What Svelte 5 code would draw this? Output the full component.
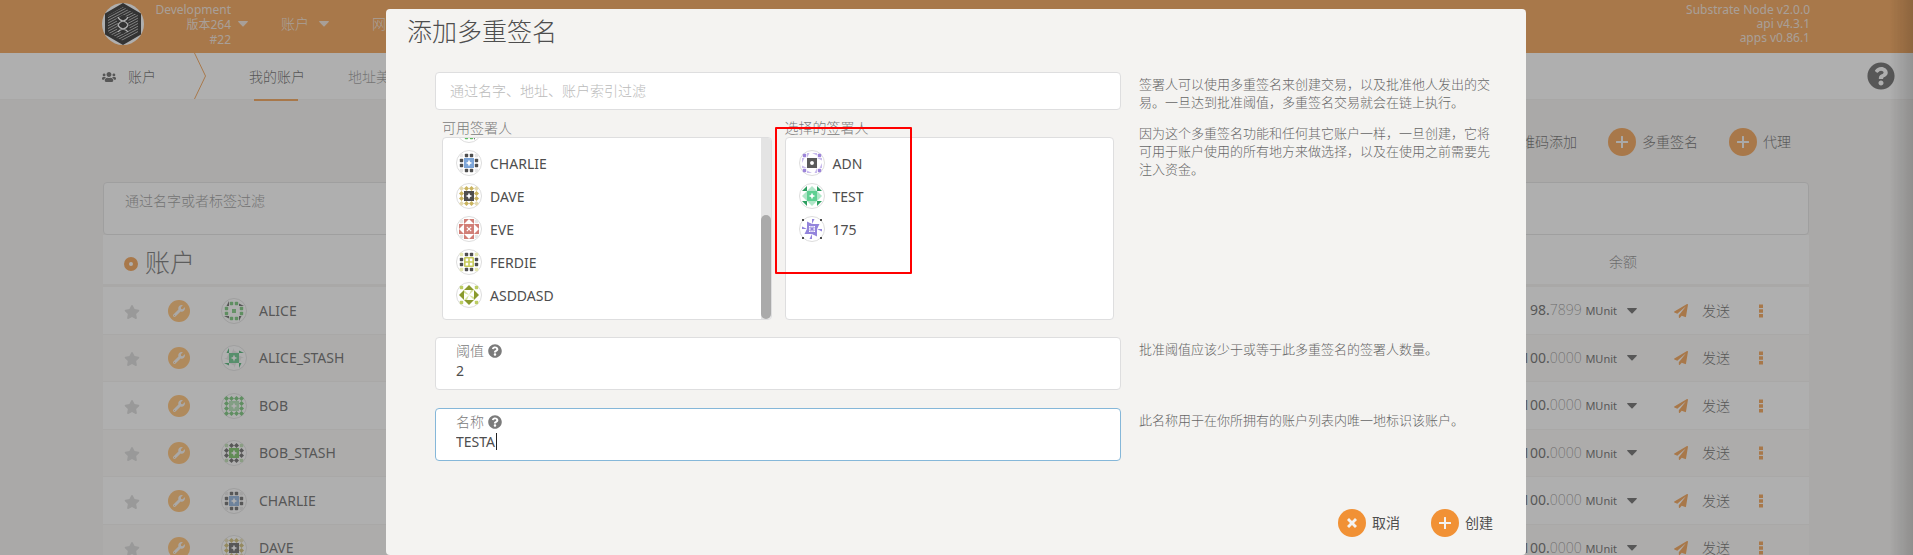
<script>
  const DARK = '#4e4e4e';
  const identicons = {
    alice: { side: ['dot', '#5fbd62', 0], corner: ['thin', DARK, 3], center: ['small', '#6cc46f'] },
    aliceStash: { side: ['thin', '#e4e4e4', 3], corner: ['thin', '#2ea55c', 3], center: ['star', '#4fbf78'] },
    bob: { side: ['rhomb', '#5fbd62', 0], corner: ['rhomb', '#5fbd62', 0], center: ['star', '#a5dca8'] },
    bobStash: { side: ['rhomb', DARK, 0], corner: ['dot', '#b5dba6', 0], center: ['star', '#62b94b'] },
    charlie: { side: ['dot', DARK, 0], corner: ['dot', '#e6e6e6', 0], center: ['star', '#7da6d9'] },
    dave: { side: ['rhomb', '#c9b35e', 0], corner: ['rhomb', '#e3d9ae', 0], center: ['star', DARK] },
    eve: { side: ['tri', '#d17f77', 1], corner: ['dot', '#e6e6e6', 0], center: ['cross', '#d17f77'] },
    ferdie: { side: ['dot', DARK, 0], corner: ['dot', '#e4e6ae', 0], center: ['grid', '#c9cc5b'] },
    asddasd: { side: ['tri', '#8a9a2d', 3], corner: ['dot', '#bccd64', 0], center: ['wheel', '#d6e09c'] },
    adn: { side: ['thin', '#c9bbec', 1], corner: ['dot', '#9d85da', 0], center: ['hole', '#5a5a5a'] },
    test: { side: ['tri', '#b0e6c8', 3], corner: ['tri', '#2d9e60', 3], center: ['star', '#5fd092'] },
    n175: { side: ['thin', '#9384dc', 0], corner: ['small', DARK, 2], center: ['waffle', '#9384dc'] }
  };
  const shapes = {
    tri: 'M5 5H0V0z',
    thin: 'M5 5H0V2.5z',
    rhomb: 'M2.5 0L5 2.5L2.5 5L0 2.5z',
    dot: 'M1.6.8h1.8q.8 0 .8.8v1.8q0 .8-.8.8H1.6q-.8 0-.8-.8V1.6q0-.8.8-.8z',
    small: 'M3 3H5V5H3z',
    star: 'M0 0H5V1.6L4 4L1.6 5H0z',
    hole: 'M0 0H5V3L3.6 3.6L3 5H0z',
    cross: 'M0 0H5V4.2L3.2 2.4L2.4 3.2L4.2 5H0z',
    grid: 'M.7 0H5V5H0V.7zM1.6 1.6V4.2H4.2V1.6z',
    wheel: 'M0 0L5 5L0 3z',
    waffle: 'M0 -1L5 0V5H0zM2 2V3.600H3.600V2zM4.300 2V3.600H5V2zM2 4.300V5H3.600V4.300z'
  };
  const cells = {
    side: [[1, 0], [2, 0], [2, 3], [1, 3], [0, 1], [3, 1], [3, 2], [0, 2]],
    corner: [[0, 0], [3, 0], [3, 3], [0, 3]],
    center: [[1, 1], [2, 1], [2, 2], [1, 2]]
  };

  const accounts = [
    { icon: 'alice', name: 'ALICE', whole: '98.', part: '7899' },
    { icon: 'aliceStash', name: 'ALICE_STASH', whole: '100.', part: '0000' },
    { icon: 'bob', name: 'BOB', whole: '100.', part: '0000' },
    { icon: 'bobStash', name: 'BOB_STASH', whole: '100.', part: '0000' },
    { icon: 'charlie', name: 'CHARLIE', whole: '100.', part: '0000' },
    { icon: 'dave', name: 'DAVE', whole: '100.', part: '0000' }
  ];
  const available = [
    { icon: 'alice', name: '' },
    { icon: 'charlie', name: 'CHARLIE' },
    { icon: 'dave', name: 'DAVE' },
    { icon: 'eve', name: 'EVE' },
    { icon: 'ferdie', name: 'FERDIE' },
    { icon: 'asddasd', name: 'ASDDASD' }
  ];
  const selected = [
    { icon: 'adn', name: 'ADN' },
    { icon: 'test', name: 'TEST' },
    { icon: 'n175', name: '175' }
  ];

  let filter = $state('');
  let signatory = $state('');
  let threshold = $state('2');
  let name = $state('TESTA');

  const glyphs = {
    star: ['0 0 576 512', 'M259.3 17.8L194 150.2 47.9 171.5c-26.2 3.8-36.7 36.1-17.7 54.6l105.7 103-25 145.5c-4.5 26.3 23.2 46 46.4 33.7L288 439.6l130.7 68.7c23.2 12.2 50.9-7.4 46.4-33.7l-25-145.5 105.7-103c19-18.5 8.5-50.8-17.7-54.6L382 150.2 316.7 17.8c-11.7-23.6-45.6-23.9-57.4 0z'],
    help: ['0 0 512 512', 'M504 256c0 136.997-111.043 248-248 248S8 392.997 8 256C8 119.083 119.043 8 256 8s248 111.083 248 248zM262.655 90c-54.497 0-89.255 22.957-116.549 63.758-3.536 5.286-2.353 12.415 2.715 16.258l34.699 26.31c5.205 3.947 12.621 3.008 16.665-2.122 17.864-22.658 30.113-35.797 57.303-35.797 20.429 0 45.698 13.148 45.698 32.958 0 14.976-12.363 22.667-32.534 33.976C247.128 238.528 216 254.941 216 296v4c0 6.627 5.373 12 12 12h56c6.627 0 12-5.373 12-12v-1.333c0-28.462 83.186-29.647 83.186-106.667 0-58.002-60.165-102-116.531-102zM256 338c-25.365 0-46 20.635-46 46 0 25.364 20.635 46 46 46s46-20.636 46-46c0-25.365-20.635-46-46-46z'],
    wrench: ['0 0 512 512', 'M507.73 109.1c-2.24-9.03-13.54-12.09-20.12-5.51l-74.36 74.36-67.88-11.31-11.31-67.88 74.36-74.36c6.62-6.62 3.43-17.9-5.66-20.16-47.38-11.74-99.55.91-136.58 37.93-39.64 39.64-50.55 97.1-34.05 147.2L18.74 402.76c-24.99 24.99-24.99 65.51 0 90.5 24.99 24.99 65.51 24.99 90.5 0l213.21-213.21c50.12 16.71 107.47 5.68 147.37-34.22 37.07-37.07 49.7-89.32 37.91-136.73zM64 472c-13.25 0-24-10.75-24-24 0-13.26 10.75-24 24-24s24 10.74 24 24c0 13.25-10.75 24-24 24z'],
    plane: ['0 0 512 512', 'M476 3.2L12.5 270.6c-18.1 10.4-15.8 35.6 2.2 43.2L121 358.4l287.3-253.2c5.5-4.9 13.3 2.6 8.6 8.3L176 407v80.5c0 23.6 28.5 32.9 42.5 15.8L282 426l124.6 52.2c14.2 6 30.4-2.9 33-18.2l72-432C515 7.8 493.3-6.8 476 3.2z'],
    users: ['0 0 640 512', 'M96 224c35.3 0 64-28.7 64-64s-28.7-64-64-64-64 28.7-64 64 28.7 64 64 64zm448 0c35.3 0 64-28.7 64-64s-28.7-64-64-64-64 28.7-64 64 28.7 64 64 64zm32 32h-64c-17.6 0-33.5 7.1-45.1 18.6 40.3 22.1 68.9 62 75.1 109.4h66c17.7 0 32-14.3 32-32v-32c0-35.3-28.7-64-64-64zm-256 0c61.9 0 112-50.1 112-112S381.9 32 320 32 208 82.1 208 144s50.1 112 112 112zm76.8 32h-8.3c-20.8 10-43.9 16-68.5 16s-47.6-6-68.5-16h-8.3C179.6 288 128 339.6 128 403.2V432c0 26.5 21.5 48 48 48h288c26.5 0 48-21.5 48-48v-28.8c0-63.6-51.6-115.2-115.2-115.2zm-223.7-13.4C161.5 263.1 145.6 256 128 256H64c-35.3 0-64 28.7-64 64v32c0 17.7 14.3 32 32 32h65.9c6.3-47.4 34.9-87.3 75.2-109.4z'],
    caret: ['0 0 10 6', 'M.6 0H9.4Q10.3.2 9.6 1L5.6 5.3Q5 5.8 4.4 5.3L.4 1Q-.3.2.6 0z'],
    dots: ['0 0 6 14', 'M1 .5h4v3.6H1zM1 5.2h4v3.6H1zM1 9.9h4v3.6H1z'],
    plus: ['0 0 12 12', 'M5 .5Q5 0 5.5 0h1Q7 0 7 .5V5h4.5q.5 0 .5.5v1q0 .5-.5.5H7v4.5q0 .5-.5.5h-1q-.5 0-.5-.5V7H.5Q0 7 0 6.5v-1Q0 5 .5 5H5z'],
    times: ['0 0 12 12', 'M3 1L6 4 9 1 11 3 8 6l3 3-2 2L6 8 3 11 1 9 4 6 1 3z']
  };
</script>

{#snippet glyph(id, cls)}
  <svg class={cls} viewBox={glyphs[id][0]} aria-hidden="true"><path d={glyphs[id][1]} fill="currentColor" /></svg>
{/snippet}

{#snippet identicon(id)}
  <svg class="identicon" viewBox="-3 -3 26 26" aria-hidden="true">
    <circle cx="10" cy="10" r="12.5" fill="#fff" stroke="#ddd" />
    {#each Object.entries(identicons[id]) as [part, [shape, color, turn = 0]]}
      {#each cells[part] as [x, y], i}
        <path d={shapes[shape]} fill={color} fill-rule="evenodd" transform={`translate(${x * 5} ${y * 5}) rotate(${(i + turn) * 90} 2.5 2.5)`} />
      {/each}
    {/each}
  </svg>
{/snippet}

<div class="page">
  <header class="menubar">
    <svg class="logo" viewBox="0 0 42 42" aria-hidden="true">
      <defs>
        <clipPath id="hex"><path d="M21 4L36 12.500V29.500L21 38L6 29.500V12.500z" /></clipPath>
      </defs>
      <circle cx="21" cy="21" r="21" fill="#fff" />
      <path d="M21 0L39 10.500V31.500L21 42L3 31.500V10.500z" fill="#060606" />
      <g clip-path="url(#hex)" stroke="#b5b5b5" stroke-width=".9">
        {#each Array(18) as _, i}
          <path d={`M4 ${i * 2.7 + 5}L38 ${i * 2.7 - 13}`} />
        {/each}
      </g>
      <path d="M21 12L27 15L26 21L28 26L21 31L15 27L16 21L14 16z" fill="#060606" />
      <path d="M16 14Q17 17 21 18T26 22M26 14Q25 17 21 18T16 22Q17 25 21 26T26 29M26 22Q25 25 21 26T16 29" fill="none" stroke="#fff" stroke-width="1.200" />
    </svg>
    <button class="chain">
      <span class="stack">Development<br />版本264<br />#22</span>
      {@render glyph('caret', 'caret')}
    </button>
    <nav class="menu">
      <button>账户 {@render glyph('caret', 'caret')}</button>
      <button>网络 {@render glyph('caret', 'caret')}</button>
    </nav>
    <div class="stack versions">Substrate Node v2.0.0<br />api v4.3.1<br />apps v0.86.1</div>
  </header>

  <nav class="tabs">
    <div class="section">{@render glyph('users', 'users')}账户</div>
    <svg class="chevron" viewBox="0 0 12 46" aria-hidden="true"><path d="M.5 0L11.500 23L.5 46" fill="none" stroke="#f19135" /></svg>
    <a class="tab active" href="#accounts">我的账户</a>
    <a class="tab" href="#contacts">地址美</a>
    <button class="help" aria-label="?">{@render glyph('help', 'help-icon')}</button>
  </nav>

  <main>
    <div class="actions">
      <button class="action"><span class="disc">{@render glyph('plus', 'mark')}</span>二维码添加</button>
      <button class="action"><span class="disc">{@render glyph('plus', 'mark')}</span>多重签名</button>
      <button class="action"><span class="disc">{@render glyph('plus', 'mark')}</span>代理</button>
    </div>
    <label class="filter">
      <span>通过名字或者标签过滤</span>
      <input type="text" bind:value={filter} />
    </label>
    <table>
      <colgroup><col class="c-star" /><col class="c-badge" /><col /><col class="c-balance" /><col class="c-actions" /></colgroup>
      <thead>
        <tr>
          <th colspan="3"><h1><i class="ring"></i>账户</h1></th>
          <th class="right">余额</th>
          <th></th>
        </tr>
      </thead>
      <tbody>
        {#each accounts as a}
          <tr>
            <td class="mid">{@render glyph('star', 'star')}</td>
            <td class="mid"><span class="badge">{@render glyph('wrench', 'wrench')}</span></td>
            <td><div class="who">{@render identicon(a.icon)}{a.name}</div></td>
            <td><div class="balance"><span>{a.whole}<span class="part">{a.part}</span> <small>MUnit</small></span>{@render glyph('caret', 'caret')}</div></td>
            <td>
              <div class="ops">
                <button class="send">{@render glyph('plane', 'plane')}发送</button>
                <button class="more" aria-label="⋮">{@render glyph('dots', 'dots')}</button>
              </div>
            </td>
          </tr>
        {/each}
      </tbody>
    </table>
  </main>
</div>

<div class="overlay">
  <div class="edge"></div>
  <div class="modal" role="dialog" aria-modal="true" aria-labelledby="title">
    <h2 id="title">添加多重签名</h2>
    <div class="row first">
      <div class="col">
        <input class="search" type="text" placeholder="通过名字、地址、账户索引过滤" aria-label="通过名字、地址、账户索引过滤" bind:value={signatory} />
        <div class="lists">
          <div class="pick">
            <div class="caption">可用签署人</div>
            <div class="list scrolled">
              <div class="items">
                {#each available as s}
                  <div class="item">{@render identicon(s.icon)}<span>{s.name}</span></div>
                {/each}
              </div>
              <div class="track"><div class="thumb"></div></div>
            </div>
          </div>
          <div class="pick">
            <div class="caption">选择的签署人</div>
            <div class="list">
              <div class="items">
                {#each selected as s}
                  <div class="item">{@render identicon(s.icon)}<span>{s.name}</span></div>
                {/each}
              </div>
            </div>
            <div class="highlight"></div>
          </div>
        </div>
      </div>
      <aside>
        <p>签署人可以使用多重签名来创建交易，以及批准他人发出的交易。一旦达到批准阈值，多重签名交易就会在链上执行。</p>
        <p>因为这个多重签名功能和任何其它账户一样，一旦创建，它将可用于账户使用的所有地方来做选择，以及在使用之前需要先注入资金。</p>
      </aside>
    </div>
    <div class="row">
      <div class="col field">
        <label for="threshold">阈值 {@render glyph('help', 'hint')}</label>
        <input id="threshold" type="text" bind:value={threshold} />
      </div>
      <aside><p>批准阈值应该少于或等于此多重签名的签署人数量。</p></aside>
    </div>
    <div class="row">
      <div class="col field focused">
        <label for="name">名称 {@render glyph('help', 'hint')}</label>
        <input id="name" type="text" bind:value={name} />
        <i class="cursor"></i>
      </div>
      <aside><p>此名称用于在你所拥有的账户列表内唯一地标识该账户。</p></aside>
    </div>
    <footer>
      <button class="action"><span class="disc">{@render glyph('times', 'mark')}</span>取消</button>
      <button class="action"><span class="disc">{@render glyph('plus', 'mark')}</span>创建</button>
    </footer>
  </div>
</div>

<style>
  :global(body) {
    background: #f5f3f1;
    color: #4e4e4e;
    font: 14px/20px "Noto Sans", "Noto Sans CJK SC", sans-serif;
  }
  .page, .page *, .overlay, .overlay * { box-sizing: border-box; }
  button, input { font: inherit; color: inherit; background: none; border: 0; padding: 0; margin: 0; outline: 0; }
  a { color: inherit; text-decoration: none; }
  h1, h2, p { margin: 0; font-weight: 300; }
  svg { display: block; flex: none; }

  .page { height: 100vh; overflow: hidden; font-weight: 300; }
  .menubar { display: flex; align-items: center; height: 53px; padding: 0 103px 5px 102px; background: #f19135; color: #f0dfd0; }
  .logo { width: 42px; height: 42px; }
  .stack { font-size: 12px; line-height: 15px; text-align: right; font-weight: 400; }
  .chain { display: flex; align-items: center; justify-content: flex-end; gap: 7px; width: 104px; }
  .versions { margin-left: auto; line-height: 14px; }
  .caret { width: 10px; height: 6px; }
  .menu { display: flex; gap: 43px; margin-left: 33px; }
  .menu button { display: flex; align-items: center; gap: 10px; }

  .tabs { display: flex; align-items: center; height: 47px; padding: 0 18px 0 102px; background: #fff; border-bottom: 1px solid #f1eeec; }
  .section { display: flex; align-items: center; gap: 12px; width: 92px; padding-top: 1px; }
  .users { width: 14px; height: 12px; }
  .chevron { width: 12px; height: 46px; }
  .tab { display: flex; align-items: center; height: 47px; margin-left: 43px; padding-top: 2px; color: #8b8b8b; }
  .tab.active { position: relative; color: #4e4e4e; }
  .tab.active::after { content: ""; position: absolute; left: 5px; right: 7px; bottom: -1px; height: 2px; background: #f19135; }
  .help { margin-left: auto; }
  .help-icon { width: 28px; height: 28px; }

  main { padding: 28px 104px 0 103px; }
  .actions { display: flex; justify-content: flex-end; gap: 31px; padding-right: 18px; margin-bottom: 26px; }
  .action { display: flex; align-items: center; gap: 6px; }
  .disc { display: flex; align-items: center; justify-content: center; width: 28px; height: 28px; border-radius: 50%; background: #f19135; color: #f4f3f1; }
  .mark { width: 12px; height: 12px; }
  .filter { display: block; height: 53px; padding: 8px 21px; border: 1px solid #dededf; border-radius: 4px; background: #fff; color: #888; }
  .filter span { display: block; }
  .filter input { display: block; width: 100%; height: 14px; }

  table { width: 100%; table-layout: fixed; border-collapse: separate; border-spacing: 0; background: #fff; }
  .c-star { width: 58px; }
  .c-badge { width: 36px; }
  .c-balance { width: 240px; }
  .c-actions { width: 172px; }
  th { height: 52px; padding: 4px 0 0; border-bottom: 3px solid #f3f1ef; text-align: left; font-weight: 300; color: #777; }
  th.right { text-align: right; }
  h1 { display: flex; align-items: center; gap: 7px; padding-left: 21px; font-size: 25px; line-height: 36px; color: #5a5a5a; }
  .ring { width: 14px; height: 14px; margin-top: 4px; border: 5px solid #f19135; border-radius: 50%; background: #fff; }
  td { height: 48px; padding: 0; border-bottom: 1px solid #f2f0ee; }
  tr:nth-child(even) td { height: 47px; background: #fbf9f7; }
  .star { width: 16px; height: 14px; margin: 2px auto 0; color: #d2d2d2; }
  .badge { display: flex; align-items: center; justify-content: center; width: 22px; height: 22px; margin: 0 auto; border-radius: 50%; background: #ffb45a; color: #f5f3f1; }
  .wrench { width: 12px; height: 12px; }
  .identicon { width: 26px; height: 26px; }
  .who { display: flex; align-items: center; gap: 12px; padding-left: 24px; font-weight: 400; }
  .balance { display: flex; align-items: center; justify-content: flex-end; gap: 10px; font-weight: 400; }
  .part { font-weight: 200; color: #777; }
  small { font-size: 11px; }
  .ops { display: flex; align-items: center; gap: 28px; padding-left: 37px; }
  .send { display: flex; align-items: center; gap: 14px; }
  .plane { width: 14px; height: 14px; color: #f19135; }
  .dots { width: 6px; height: 14px; color: #f19135; }

  .overlay { position: fixed; inset: 0; padding: 9px 1px 0 0; background: rgba(96, 96, 96, .5); overflow: hidden; }
  .edge { position: absolute; top: 0; right: 0; bottom: 0; width: 24px; background: linear-gradient(to right, rgba(0, 0, 0, 0), rgba(0, 0, 0, .16)); }
  .modal { position: relative; max-width: 1140px; min-height: 100%; margin: 0 auto; padding: 0 21px; border-radius: 4px; background: #f4f3f1; }
  h2 { padding: 4px 0 0; font-size: 25px; line-height: 36px; }
  .row { display: grid; grid-template-columns: minmax(0, 686fr) minmax(0, 359fr); gap: 18px; margin: 18px 7px 0 28px; font-weight: 300; }
  .row.first { margin-top: 23px; }
  .first + .row { margin-top: 17px; }
  aside { padding-top: 3px; font-size: 13px; line-height: 18px; color: #666; }
  aside p + p { margin-top: 13px; }
  .search { display: block; width: 100%; height: 38px; padding: 0 14px 1px; border: 1px solid #dededf; border-radius: 4px; background: #fff; }
  .search::placeholder { color: #bbb; opacity: 1; }
  .lists { display: flex; gap: 13px; margin: 9px 7px 0; }
  .pick { position: relative; flex: 1; min-width: 0; }
  .caption { line-height: 18px; color: #7b7b7b; }
  .list { display: flex; height: 183px; border: 1px solid #dededf; border-radius: 4px; background: #fff; overflow: hidden; }
  .items { flex: 1; padding: 8px 13px; }
  .scrolled .items { display: flex; flex-direction: column; justify-content: flex-end; }
  .item { display: flex; flex: none; align-items: center; gap: 8px; height: 33px; font-weight: 400; }
  .item span { padding-top: 3px; }
  .track { display: flex; align-items: flex-end; width: 10px; background: #e4e4e4; }
  .thumb { width: 10px; height: 104px; border-radius: 5px; background: #aaa; }
  .highlight { position: absolute; top: 8px; left: -10px; width: 137px; height: 147px; border: 2px solid #f00; border-radius: 1px; }
  .field { position: relative; height: 53px; padding: 3px 20px; border: 1px solid #dededf; border-radius: 4px; background: #fff; }
  .field.focused { border-color: #85b7d9; }
  .field label { display: flex; align-items: center; gap: 4px; color: #7b7b7b; }
  .hint { width: 14px; height: 14px; }
  .field input { display: block; width: 100%; height: 20px; font-weight: 400; caret-color: transparent; }
  .cursor { position: absolute; left: 60px; top: 24px; width: 1px; height: 17px; background: #222; }
  footer { display: flex; justify-content: flex-end; gap: 31px; padding: 48px 12px 0 0; }
</style>
